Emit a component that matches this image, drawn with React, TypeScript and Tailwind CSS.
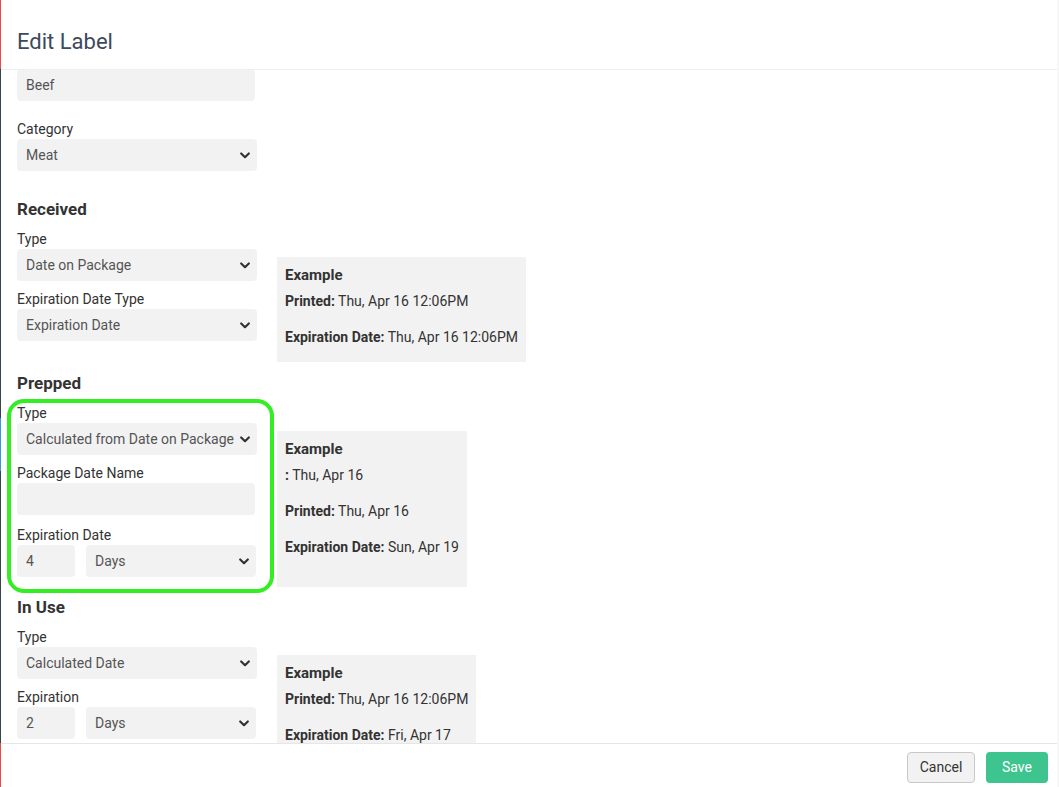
import React from "react";

function Chevron() {
  return (
    <svg width="10" height="7" viewBox="0 0 10 7" className="shrink-0">
      <path d="M1.2 1.5 L5 5.2 L8.8 1.5" fill="none" stroke="#333" strokeWidth="2.2" strokeLinecap="round" strokeLinejoin="round" />
    </svg>
  );
}

function Select({ value, w = "w-[240px]" }: { value: string; w?: string }) {
  return (
    <div className={`${w} h-[32px] rounded-[4px] bg-[#f2f2f2] flex items-center justify-between pl-[9px] pr-[7px] text-[14px] text-[#555] whitespace-nowrap overflow-hidden`}>
      <span>{value}</span>
      <Chevron />
    </div>
  );
}

function Input({ value, w = "w-[238px]" }: { value: string; w?: string }) {
  return (
    <div className={`${w} h-[32px] rounded-[4px] bg-[#f2f2f2] flex items-center pl-[9px] text-[14px] text-[#555]`}>
      {value}
    </div>
  );
}

function Label({ children }: { children: React.ReactNode }) {
  return <div className="h-[20px] leading-[20px] text-[14px] text-[#333]">{children}</div>;
}

function Heading({ children }: { children: React.ReactNode }) {
  return <div className="h-[24px] leading-[24px] text-[17px] font-bold text-[#333]">{children}</div>;
}

function Example({ lines, pb = "pb-[15px]" }: { lines: { b: string; v: string }[]; pb?: string }) {
  return (
    <div className={`mt-[28px] ml-[20px] w-fit shrink-0 bg-[#f2f2f2] pt-[8px] px-[8px] ${pb}`}>
      <div className="leading-[20px] text-[15px] font-bold text-[#333]">Example</div>
      {lines.map((l, i) => (
        <p
          key={i}
          className={`leading-[20px] text-[14px] text-[#333] whitespace-nowrap ${i === 0 ? "mt-[6px]" : "mt-[16px]"}`}
        >
          <span className="font-bold">{l.b}</span> {l.v}
        </p>
      ))}
    </div>
  );
}

export default function App() {
  return (
    <div className="w-[1059px] h-[787px] flex overflow-hidden bg-white" style={{ fontFamily: "Roboto, 'Noto Sans', sans-serif" }}>
      {/* page strip behind modal */}
      <div className="w-px flex flex-col shrink-0">
        <div className="h-[69px] bg-[#e74c3c]" />
        <div className="h-[349px] bg-[#34444e]" />
        <div className="h-[53px] bg-[#3498db]" />
        <div className="h-[272px] bg-[#34444e]" />
        <div className="flex-1 bg-[#e74c3c]" />
      </div>

      <div className="flex-1 flex flex-col bg-white">
        {/* header */}
        <div className="h-[70px] shrink-0 border-b border-[#eeeeee] pl-[16px] pt-[29px]">
          <div className="text-[22px] leading-[26px] text-[#3d4a5c]">Edit Label</div>
        </div>

        {/* body */}
        <div className="flex-1 overflow-hidden">
          <div className="-mt-[1px] pl-[16px] flex flex-col">
            <Input value="Beef" />
            <div className="mt-[18px]">
              <Label>Category</Label>
              <Select value="Meat" />
            </div>

            <div className="mt-[26px]">
              <Heading>Received</Heading>
            </div>
            <div className="mt-[8px] flex items-start">
              <div className="flex flex-col">
                <Label>Type</Label>
                <Select value="Date on Package" />
                <div className="mt-[8px]">
                  <Label>Expiration Date Type</Label>
                </div>
                <Select value="Expiration Date" />
              </div>
              <Example
                lines={[
                  { b: "Printed:", v: "Thu, Apr 16 12:06PM" },
                  { b: "Expiration Date:", v: "Thu, Apr 16 12:06PM" },
                ]}
              />
            </div>

            <div className="mt-[9px]">
              <Heading>Prepped</Heading>
            </div>
            <div className="mt-[8px] flex items-start">
              <div className="relative flex flex-col">
                <div className="absolute -top-[4px] -left-[10px] -right-[17px] -bottom-[16px] rounded-[17px] border-[4px] border-[#33ee22] pointer-events-none" />
                <Label>Type</Label>
                <Select value="Calculated from Date on Package" />
                <div className="mt-[8px]">
                  <Label>Package Date Name</Label>
                </div>
                <Input value="" />
                <div className="mt-[10px]">
                  <Label>Expiration Date</Label>
                </div>
                <div className="flex gap-[11px]">
                  <Input value="4" w="w-[58px]" />
                  <Select value="Days" w="w-[170px]" />
                </div>
              </div>
              <Example
                pb="pb-[30px]"
                lines={[
                  { b: ":", v: "Thu, Apr 16" },
                  { b: "Printed:", v: "Thu, Apr 16" },
                  { b: "Expiration Date:", v: "Sun, Apr 19" },
                ]}
              />
            </div>

            <div className="mt-[8px]">
              <Heading>In Use</Heading>
            </div>
            <div className="mt-[8px] flex items-start">
              <div className="flex flex-col">
                <Label>Type</Label>
                <Select value="Calculated Date" />
                <div className="mt-[8px]">
                  <Label>Expiration</Label>
                </div>
                <div className="flex gap-[11px]">
                  <Input value="2" w="w-[58px]" />
                  <Select value="Days" w="w-[170px]" />
                </div>
              </div>
              <Example
                lines={[
                  { b: "Printed:", v: "Thu, Apr 16 12:06PM" },
                  { b: "Expiration Date:", v: "Fri, Apr 17" },
                ]}
              />
            </div>
          </div>
        </div>

        {/* footer */}
        <div className="h-[44px] shrink-0 border-t border-[#e6e6e6] flex items-start justify-end gap-[11px] pt-[8px] pr-[9px]">
          <div className="w-[68px] h-[31px] rounded-[4px] border border-[#c8c8c8] bg-[#f2f2f2] flex items-center justify-center text-[14px] text-[#333]">
            Cancel
          </div>
          <div className="w-[62px] h-[31px] rounded-[4px] bg-[#3dc48f] flex items-center justify-center text-[14px] text-white">
            Save
          </div>
        </div>
      </div>
      <div className="w-[2px] shrink-0 bg-[#f7f7f7]" />
    </div>
  );
}
